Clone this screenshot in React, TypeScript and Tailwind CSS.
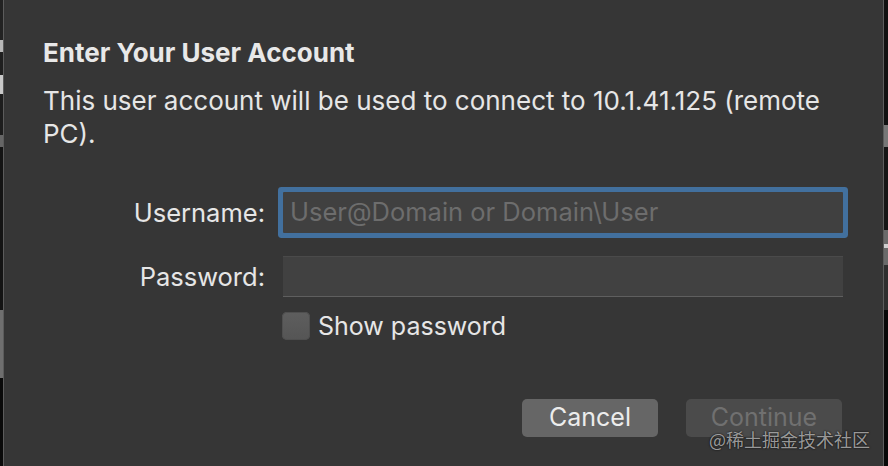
import React from "react";

const font = { fontFamily: 'Inter, "Liberation Sans", sans-serif' };

export default function App() {
  return (
    <div
      className="relative flex w-[888px] h-[466px] overflow-hidden bg-[#0e0e0e]"
      style={font}
    >
      {/* left background strip */}
      <div className="flex w-[3px] flex-col">
        <div className="h-[40px] bg-[#222]" />
        <div className="h-[12px] bg-[#b8b8b8]" />
        <div className="h-[23px] bg-[#1f1f1f]" />
        <div className="h-[19px] bg-[#c9c9c9]" />
        <div className="h-[41px] bg-[#1d1d1d]" />
        <div className="h-[12px] bg-[#666]" />
        <div className="h-[163px] bg-[#141414]" />
        <div className="h-[68px] bg-[#6f6f6f]" />
        <div className="flex-1 bg-[#0a0a0a]" />
      </div>

      {/* dialog */}
      <div className="flex-1 border-x border-[#5c5c5c] bg-[#363636] pl-[39px] pt-[38px] text-[#e6e6e6]">
        <div className="text-[26px] font-bold leading-[30px] text-[#e8e8e8]">
          Enter Your User Account
        </div>
        <div className="mt-[16px] text-[26px] leading-[33px] text-[#e6e6e6]">
          This user account will be used to connect to 10.1.41.125 (remote
          <br />
          PC).
        </div>

        <div className="mt-[42px] flex items-center">
          <div className="w-[222px] text-right text-[25.5px] leading-[30px]">
            Username:
          </div>
          <div className="ml-[18px] flex h-[41px] w-[560px] items-center rounded-[1px] bg-[#404040] pl-[7px] text-[25.5px] text-[#6d6d6d] ring-[5px] ring-[#42709e]">
            User@Domain or Domain\User
          </div>
        </div>

        <div className="mt-[23px] flex items-center">
          <div className="w-[222px] text-right text-[25.5px] leading-[30px]">
            Password:
          </div>
          <div className="ml-[18px] h-[41px] w-[560px] border-t border-b border-t-[#4a4a4a] border-b-[#5f5f5f] bg-[#414141]" />
        </div>

        <div className="ml-[239px] mt-[14px] flex items-center">
          <div className="h-[28px] w-[28px] rounded-[5px] bg-gradient-to-b from-[#5e5e5e] to-[#555] shadow-[inset_0_0_0_1px_#4f4f4f]" />
          <div className="ml-[8px] text-[25px] leading-[30px]">Show password</div>
        </div>

        <div className="ml-[479px] mt-[58px] flex gap-[28px]">
          <div className="flex h-[38px] w-[136px] items-center justify-center rounded-[5px] bg-[#666666] text-[25px] text-[#ececec]">
            Cancel
          </div>
          <div className="flex h-[38px] w-[156px] items-center justify-center rounded-[5px] bg-[#4b4b4b] text-[25px] text-[#707070]">
            Continue
          </div>
        </div>
      </div>

      {/* right background strip */}
      <div className="flex w-[4px] flex-col">
        <div className="h-[125px] bg-[#111]" />
        <div className="h-[22px] bg-[#777]" />
        <div className="h-[83px] bg-[#151515]" />
        <div className="h-[14px] bg-[#6a6a6a]" />
        <div className="h-[4px] bg-[#cfcfcf]" />
        <div className="h-[17px] bg-[#6a6a6a]" />
        <div className="h-[45px] bg-[#2e2e2e]" />
        <div className="flex-1 bg-[#080808]" />
      </div>

      {/* watermark */}
      <div
        className="absolute left-[709px] top-[428px] text-[18px] leading-[22px] text-[#bdbdbd]/80 [text-shadow:0_0_2px_#000]"
        style={{ fontFamily: '"Noto Sans CJK SC", "Liberation Sans", sans-serif' }}
      >
        @稀土掘金技术社区
      </div>
    </div>
  );
}
